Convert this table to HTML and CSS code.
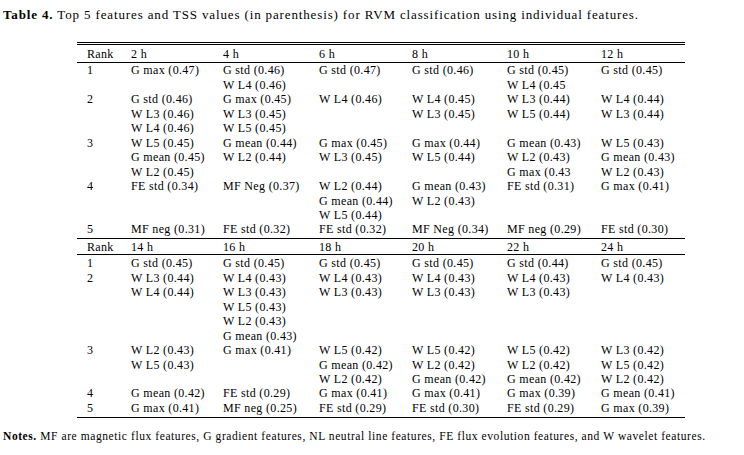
FILE: index.html
```html
<!DOCTYPE html>
<html>
<head>
<meta charset="utf-8">
<link rel="stylesheet" href="styles.css">
</head>
<body>
<p class="caption"><b>Table 4.</b> Top 5 features and TSS values (in parenthesis) for RVM classification using individual features.</p>
<table class="tss">
  <colgroup>
    <col class="c-rank"><col class="c-a"><col class="c-b"><col class="c-c"><col class="c-d"><col class="c-e"><col class="c-f">
  </colgroup>
  <tbody>
    <tr class="head first">
      <td>Rank</td><td>2 h</td><td>4 h</td><td>6 h</td><td>8 h</td><td>10 h</td><td>12 h</td>
    </tr>
    <tr class="top">
      <td>1</td>
      <td>G max (0.47)</td>
      <td>G std (0.46)<br>W L4 (0.46)</td>
      <td>G std (0.47)</td>
      <td>G std (0.46)</td>
      <td>G std (0.45)<br>W L4 (0.45</td>
      <td>G std (0.45)</td>
    </tr>
    <tr>
      <td>2</td>
      <td>G std (0.46)<br>W L3 (0.46)<br>W L4 (0.46)</td>
      <td>G max (0.45)<br>W L3 (0.45)<br>W L5 (0.45)</td>
      <td>W L4 (0.46)</td>
      <td>W L4 (0.45)<br>W L3 (0.45)</td>
      <td>W L3 (0.44)<br>W L5 (0.44)</td>
      <td>W L4 (0.44)<br>W L3 (0.44)</td>
    </tr>
    <tr>
      <td>3</td>
      <td>W L5 (0.45)<br>G mean (0.45)<br>W L2 (0.45)</td>
      <td>G mean (0.44)<br>W L2 (0.44)</td>
      <td>G max (0.45)<br>W L3 (0.45)</td>
      <td>G max (0.44)<br>W L5 (0.44)</td>
      <td>G mean (0.43)<br>W L2 (0.43)<br>G max (0.43</td>
      <td>W L5 (0.43)<br>G mean (0.43)<br>W L2 (0.43)</td>
    </tr>
    <tr>
      <td>4</td>
      <td>FE std (0.34)</td>
      <td>MF Neg (0.37)</td>
      <td>W L2 (0.44)<br>G mean (0.44)<br>W L5 (0.44)</td>
      <td>G mean (0.43)<br>W L2 (0.43)</td>
      <td>FE std (0.31)</td>
      <td>G max (0.41)</td>
    </tr>
    <tr class="last">
      <td>5</td>
      <td>MF neg (0.31)</td>
      <td>FE std (0.32)</td>
      <td>FE std (0.32)</td>
      <td>MF Neg (0.34)</td>
      <td>MF neg (0.29)</td>
      <td>FE std (0.30)</td>
    </tr>
    <tr class="head second">
      <td>Rank</td><td>14 h</td><td>16 h</td><td>18 h</td><td>20 h</td><td>22 h</td><td>24 h</td>
    </tr>
    <tr class="top2">
      <td>1</td>
      <td>G std (0.45)</td>
      <td>G std (0.45)</td>
      <td>G std (0.45)</td>
      <td>G std (0.45)</td>
      <td>G std (0.44)</td>
      <td>G std (0.45)</td>
    </tr>
    <tr>
      <td>2</td>
      <td>W L3 (0.44)<br>W L4 (0.44)</td>
      <td>W L4 (0.43)<br>W L3 (0.43)<br>W L5 (0.43)<br>W L2 (0.43)<br>G mean (0.43)</td>
      <td>W L4 (0.43)<br>W L3 (0.43)</td>
      <td>W L4 (0.43)<br>W L3 (0.43)</td>
      <td>W L4 (0.43)<br>W L3 (0.43)</td>
      <td>W L4 (0.43)</td>
    </tr>
    <tr>
      <td>3</td>
      <td>W L2 (0.43)<br>W L5 (0.43)</td>
      <td>G max (0.41)</td>
      <td>W L5 (0.42)<br>G mean (0.42)<br>W L2 (0.42)</td>
      <td>W L5 (0.42)<br>W L2 (0.42)<br>G mean (0.42)</td>
      <td>W L5 (0.42)<br>W L2 (0.42)<br>G mean (0.42)</td>
      <td>W L3 (0.42)<br>W L5 (0.42)<br>W L2 (0.42)</td>
    </tr>
    <tr>
      <td>4</td>
      <td>G mean (0.42)</td>
      <td>FE std (0.29)</td>
      <td>G max (0.41)</td>
      <td>G max (0.41)</td>
      <td>G max (0.39)</td>
      <td>G mean (0.41)</td>
    </tr>
    <tr class="end">
      <td>5</td>
      <td>G max (0.41)</td>
      <td>MF neg (0.25)</td>
      <td>FE std (0.29)</td>
      <td>FE std (0.30)</td>
      <td>FE std (0.29)</td>
      <td>G max (0.39)</td>
    </tr>
  </tbody>
</table>
<p class="notes"><b>Notes.</b> MF are magnetic flux features, G gradient features, NL neutral line features, FE flux evolution features, and W wavelet features.</p>
</body>
</html>
```

FILE: styles.css
```css
html, body {
  margin: 0;
  padding: 0;
  background: #ffffff;
}

body {
  font-family: "Liberation Serif", "Times New Roman", serif;
  font-size: 12px;
  letter-spacing: 0.33px;
  color: #000000;
  width: 744px;
  height: 455px;
  overflow: hidden;
}

.caption {
  margin: 7px 0 0 3px;
  font-size: 13px;
  letter-spacing: 0.86px;
  line-height: 15px;
  white-space: nowrap;
}

.caption b,
.notes b {
  font-weight: bold;
}

.tss {
  margin: 20px 0 0 77px;
  width: 608px;
  table-layout: fixed;
  border-collapse: collapse;
}

.c-rank { width: 44px; }
.c-a { width: 92px; }
.c-b { width: 96px; }
.c-c { width: 93px; }
.c-d { width: 95px; }
.c-e { width: 94px; }
.c-f { width: 94px; }

.tss td {
  padding: 0 0 0 10px;
  vertical-align: top;
  line-height: 14.45px;
  white-space: nowrap;
  text-align: left;
}

.tss tr.first td {
  border-top: 3px double #000;
  border-bottom: 1px solid #000;
  padding-top: 2px;
  padding-bottom: 1px;
}

.tss tr.last td {
  padding-bottom: 1px;
}

.tss tr.second td {
  border-top: 1px solid #000;
  border-bottom: 1px solid #000;
  padding-top: 1px;
  padding-bottom: 0;
}

.tss tr.top2 td {
  padding-top: 1px;
}

.tss tr.end td {
  border-bottom: 1px solid #000;
  padding-bottom: 2px;
}

.notes {
  margin: 11px 0 0 3px;
  font-size: 11.5px;
  letter-spacing: 0.58px;
  line-height: 14px;
  white-space: nowrap;
}
```
